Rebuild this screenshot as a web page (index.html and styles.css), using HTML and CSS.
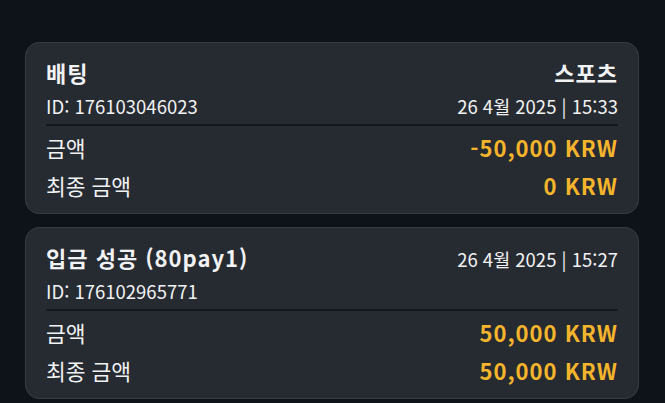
FILE: index.html
```html
<!DOCTYPE html>
<html lang="ko">
<head>
    <meta charset="UTF-8">
    <meta name="viewport" content="width=device-width, initial-scale=1.0">
    <title>거래 내역</title>
    <link rel="stylesheet" href="styles.css">
</head>
<body>
    <div class="history">
        <div class="card">
            <div class="row head">
                <span class="title">배팅</span>
                <span class="type">스포츠</span>
            </div>
            <div class="row meta">
                <span>ID: 176103046023</span>
                <span>26 4월 2025 | 15:33</span>
            </div>
            <div class="divider"></div>
            <div class="row amount">
                <span>금액</span>
                <span class="value">-50,000 KRW</span>
            </div>
            <div class="row amount">
                <span>최종 금액</span>
                <span class="value">0 KRW</span>
            </div>
        </div>

        <div class="card">
            <div class="row head">
                <span class="title">입금 성공 (80pay1)</span>
                <span class="date">26 4월 2025 | 15:27</span>
            </div>
            <div class="row meta">
                <span>ID: 176102965771</span>
            </div>
            <div class="divider"></div>
            <div class="row amount">
                <span>금액</span>
                <span class="value">50,000 KRW</span>
            </div>
            <div class="row amount">
                <span>최종 금액</span>
                <span class="value">50,000 KRW</span>
            </div>
        </div>
    </div>
</body>
</html>
```

FILE: styles.css
```css
body {
    margin: 0;
    background-color: #0e1319;
    color: #f1f2f4;
    font-family: "Noto Sans CJK KR", "Noto Sans", sans-serif;
}
.history {
    display: flex;
    flex-direction: column;
    gap: 13px;
    padding: 42px 26px 0 25px;
}
.card {
    background-color: #262a31;
    border: 1px solid #373b42;
    border-radius: 14px;
    padding: 14px 20px 9px;
}
.row {
    display: flex;
    justify-content: space-between;
    align-items: center;
}
.head {
    height: 30px;
}
.title, .type {
    font-size: 22px;
    font-weight: 700;
    letter-spacing: 1px;
}
.date, .meta {
    font-size: 18.5px;
}
.date {
    margin-top: 3px;
}
.meta {
    height: 30px;
    margin-top: 4px;
}
.divider {
    border-top: 2px solid #15191e;
    margin: 3px 0 2px;
}
.amount {
    height: 38px;
    font-size: 21.5px;
}
.value {
    color: #f4b52c;
    font-weight: 700;
    font-size: 22px;
    letter-spacing: 1px;
}
```
